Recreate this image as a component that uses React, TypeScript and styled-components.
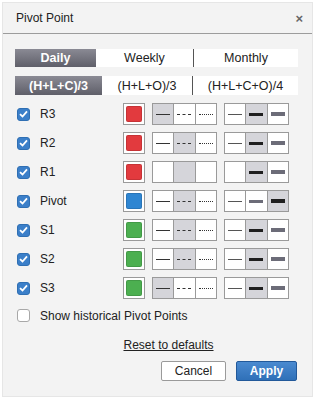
import React from 'react';
import styled, { createGlobalStyle } from 'styled-components';

const GlobalStyle = createGlobalStyle`
  body { margin:0; background:#fff; font-family:"Liberation Sans", Arial, sans-serif; color:#222; }
`;

const Dialog = styled.div`
  box-sizing:border-box;
  margin:2px 0 0 2px;
  width:311px;
  height:395px;
  background:#f3f3f3;
  border:1px solid #e6e6e6;
  display:flex;
  flex-direction:column;
`;

const Header = styled.div`
  height:30px;
  border-bottom:1px solid #9c9c9c;
  display:flex;
  align-items:center;
  justify-content:space-between;
  padding:0 9px 0 13px;
  font-size:12px;
`;

const Close = styled.span`
  font-size:13px;
  font-weight:bold;
  color:#666;
`;

const Body = styled.div`
  padding:15px 14px 0 12px;
  display:flex;
  flex-direction:column;
`;

const TabBar = styled.div<{ $h: number; $top?: number }>`
  display:flex;
  height:${({ $h }) => $h}px;
  margin-top:${({ $top }) => $top || 0}px;
  background:#fff;
  font-size:12.5px;
`;

const Tab = styled.div<{ $w: number; $active?: boolean; $divider?: boolean }>`
  width:${({ $w }) => $w}px;
  flex:none;
  display:flex;
  align-items:center;
  justify-content:center;
  box-sizing:border-box;
  border-left:${({ $divider }) => ($divider ? '1px solid #555' : 'none')};
  color:${({ $active }) => ($active ? '#fff' : '#222')};
  font-weight:${({ $active }) => ($active ? 'bold' : 'normal')};
  background:${({ $active }) => ($active ? 'linear-gradient(#8a8a94, #5f5f69)' : 'transparent')};
`;

const Rows = styled.div`
  margin-top:8px;
  display:flex;
  flex-direction:column;
  gap:7px;
`;

// columns: checkbox+gap, label, swatch+gap, line style+gap, line width
const Row = styled.div`
  display:grid;
  grid-template-columns:23px 83px 29px 72px 65px;
  justify-items:start;
  align-items:center;
  height:22px;
  padding-left:2px;
`;

const Check = styled.span<{ $on?: boolean }>`
  box-sizing:border-box;
  width:13px;
  height:13px;
  border-radius:3px;
  background:${({ $on }) => ($on ? '#3b7fc9' : '#fff')};
  border:1px solid ${({ $on }) => ($on ? '#2f6fb3' : '#a8a8a8')};
  display:flex;
  align-items:center;
  justify-content:center;
  flex:none;
`;

const Label = styled.span`
  font-size:12px;
  white-space:nowrap;
`;

const Swatch = styled.span<{ $c: string }>`
  box-sizing:border-box;
  width:22px;
  height:22px;
  border:1px solid #9a9a9a;
  background:#fff;
  padding:2px;
  display:flex;
  &::after {
    content:'';
    flex:1;
    border-radius:2px;
    background:${({ $c }) => $c};
    box-shadow:inset 0 0 0 1px rgba(0,0,0,.12);
  }
`;

const Group = styled.div`
  display:flex;
  box-sizing:border-box;
  width:65px;
  height:22px;
  border:1px solid #9a9a9a;
  background:#fff;
`;

const Cell = styled.div<{ $sel?: boolean }>`
  flex:1;
  display:flex;
  align-items:center;
  justify-content:center;
  background:${({ $sel }) => ($sel ? '#d5d5da' : '#fff')};
  & + & { border-left:1px solid #9a9a9a; }
`;

const Stroke = styled.span<{ $kind: 'solid' | 'dashed' | 'dotted' }>`
  width:14px;
  height:0;
  border-top:1px ${({ $kind }) => $kind} #333;
`;

const Bar = styled.span<{ $t: number; $dark?: boolean }>`
  width:14px;
  height:${({ $t }) => $t}px;
  background:${({ $dark, $t }) => ($t === 1 ? '#555' : $dark ? '#1f1f1f' : '#6c6c78')};
`;

const Footer = styled.div`
  display:flex;
  flex-direction:column;
`;

const HistRow = styled.div`
  display:flex;
  align-items:center;
  margin-top:10px;
  padding-left:2px;
  height:13px;
  gap:10px;
`;

const Reset = styled.a`
  align-self:center;
  margin:16px 0 0 24px;
  font-size:12px;
  color:#222;
  text-decoration:underline;
`;

const Buttons = styled.div`
  display:flex;
  justify-content:flex-end;
  gap:10px;
  margin-top:9px;
  padding-right:1px;
`;

const Button = styled.button<{ $primary?: boolean }>`
  height:20px;
  width:${({ $primary }) => ($primary ? 61 : 65)}px;
  font:${({ $primary }) => ($primary ? 'bold' : 'normal')} 12px "Liberation Sans", Arial, sans-serif;
  padding:0;
  border-radius:2px;
  border:1px solid ${({ $primary }) => ($primary ? '#22599a' : '#9a9a9a')};
  background:${({ $primary }) => ($primary ? 'linear-gradient(#4a8ad0, #2f70b8)' : '#fff')};
  color:${({ $primary }) => ($primary ? '#fff' : '#222')};
`;

const Tick = () => (
  <svg width="9" height="8" viewBox="0 0 9 8">
    <path d="M1 4.2 L3.5 6.5 L8 1.3" fill="none" stroke="#fff" strokeWidth="1.8" />
  </svg>
);

type Level = { name: string; color: string; style: number; width: number; blank?: boolean };

const levels: Level[] = [
  { name: 'R3', color: '#e23a3e', style: 0, width: 1 },
  { name: 'R2', color: '#e23a3e', style: 1, width: 1 },
  { name: 'R1', color: '#e23a3e', style: 1, width: 1, blank: true },
  { name: 'Pivot', color: '#2f86d2', style: 1, width: 2 },
  { name: 'S1', color: '#4caf50', style: 1, width: 1 },
  { name: 'S2', color: '#4caf50', style: 1, width: 1 },
  { name: 'S3', color: '#4caf50', style: 0, width: 1 },
];

const kinds: ('solid' | 'dashed' | 'dotted')[] = ['solid', 'dashed', 'dotted'];
const thick = [1, 3, 4];

const App: React.FC = () => (
  <>
    <GlobalStyle />
    <Dialog>
      <Header>
        <span>Pivot Point</span>
        <Close>×</Close>
      </Header>
      <Body>
        <TabBar $h={18}>
          <Tab $w={81} $active>Daily</Tab>
          <Tab $w={97}>Weekly</Tab>
          <Tab $w={105} $divider>Monthly</Tab>
        </TabBar>
        <TabBar $h={19} $top={9}>
          <Tab $w={87} $active>(H+L+C)/3</Tab>
          <Tab $w={90}>(H+L+O)/3</Tab>
          <Tab $w={106} $divider>(H+L+C+O)/4</Tab>
        </TabBar>
        <Rows>
          {levels.map((l) => (
            <Row key={l.name}>
              <Check $on><Tick /></Check>
              <Label>{l.name}</Label>
              <Swatch $c={l.color} />
              <Group>
                {kinds.map((k, i) => (
                  <Cell key={k} $sel={l.style === i}>
                    {!l.blank && <Stroke $kind={k} />}
                  </Cell>
                ))}
              </Group>
              <Group>
                {thick.map((t, i) => (
                  <Cell key={t} $sel={l.width === i}>
                    {!(l.blank && i === 0) && <Bar $t={t} $dark={l.width === i} />}
                  </Cell>
                ))}
              </Group>
            </Row>
          ))}
        </Rows>
        <Footer>
          <HistRow>
            <Check />
            <Label>Show historical Pivot Points</Label>
          </HistRow>
          <Reset>Reset to defaults</Reset>
          <Buttons>
            <Button>Cancel</Button>
            <Button $primary>Apply</Button>
          </Buttons>
        </Footer>
      </Body>
    </Dialog>
  </>
);

export default App;
